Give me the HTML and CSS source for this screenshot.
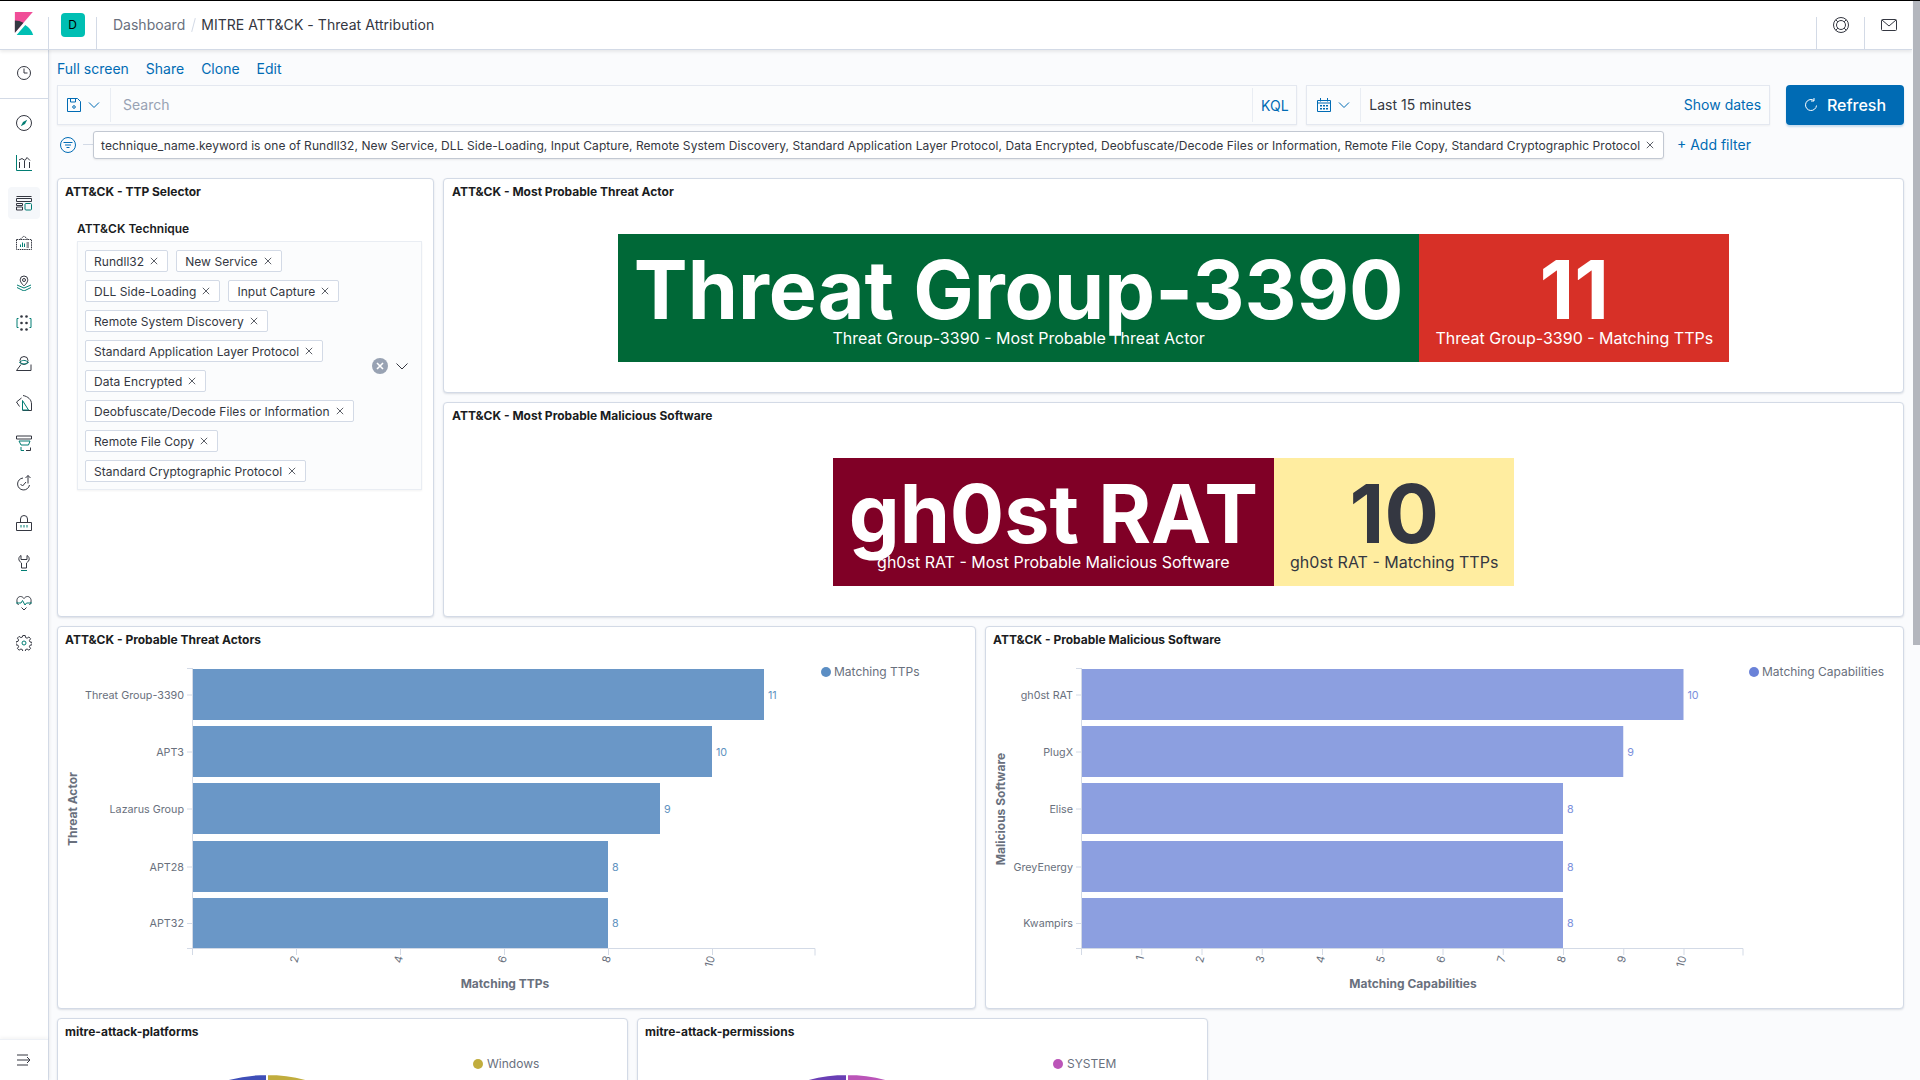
FILE: index.html
```html
<!DOCTYPE html>
<html lang="en">
<head>
    <meta charset="UTF-8">
    <title>MITRE ATT&amp;CK - Threat Attribution - Kibana</title>
    <link rel="stylesheet" href="styles.css">
</head>
<body>
<div class="top-line"></div>
<div class="scroll-track"><div class="scroll-thumb"></div></div>
<div class="app">
    <header class="header">
        <div class="logo-cell">
            <svg width="23" height="23" viewBox="0 0 32 32"><path fill="#F04E98" d="M4 0v28.789L28.935.017z"/><path fill="#343741" d="M4 12v16.789l11.906-13.738A24.721 24.721 0 004 12"/><path fill="#00BFB3" d="M18.479 18.09L6.421 32h23.054a24.857 24.857 0 00-10.996-13.91z"/></svg>
        </div>
        <div class="space-cell"><span class="avatar">D</span></div>
        <nav class="crumbs"><span class="crumb-link">Dashboard</span><span class="crumb-sep"></span><span class="crumb-now">MITRE ATT&amp;CK - Threat Attribution</span></nav>
        <div class="head-btn">
            <svg class="ic16" viewBox="0 0 16 16"><g fill="none" stroke="#343741"><circle cx="8" cy="8" r="7.5"/><circle cx="8" cy="8" r="4.5"/><path d="M2.700 2.700l2.200 2.200M13.300 2.700l-2.200 2.200M2.700 13.300l2.200-2.200M13.300 13.300l-2.200-2.200"/></g></svg>
        </div>
        <div class="head-btn">
            <svg class="ic16" viewBox="0 0 16 16"><g fill="none" stroke="#343741"><rect x=".5" y="2.500" width="15" height="11" rx="1"/><path d="M1 3l7 6 7-6"/></g></svg>
        </div>
    </header>

    <aside class="sidenav">
        <div class="nav-group first">
            <div class="nav-item"><svg class="ic16" viewBox="0 0 16 16"><g fill="none" stroke="#343741"><circle cx="8" cy="8" r="6.500"/><path d="M8 3.500V8h3.500"/></g></svg></div>
        </div>
        <div class="nav-group">
            <div class="nav-item"><svg class="ic16" viewBox="0 0 16 16"><circle cx="8" cy="8" r="7.500" fill="none" stroke="#343741"/><path d="M11.200 4.800L9 9 4.800 11.200 7 7z" fill="#017d73"/></svg></div>
            <div class="nav-item"><svg class="ic16" viewBox="0 0 16 16"><path d="M.5 0v15.500H16" fill="none" stroke="#017d73"/><path d="M3.500 7v6M8.500 6v7M13.500 7v6M3 5l3-1.500L9 5.500 11 2.500l3 3" fill="none" stroke="#343741"/></svg></div>
            <div class="nav-item active"><svg class="ic16" viewBox="0 0 16 16"><g fill="none" stroke="#343741"><path d="M.5 1.500h15M.5 3.500h15v3H.5zM.5 12h6v3h-6zM.5 8.500h6v2h-6z"/></g><rect x="9" y="8.500" width="6.500" height="6.500" rx="1" fill="none" stroke="#017d73"/></svg></div>
            <div class="nav-item"><svg class="ic16" viewBox="0 0 16 16"><path d="M.5 4.500h15v10H.5zM4 4.500L8 1l4 3.500" fill="none" stroke="#343741" stroke-dasharray="1.500 .7"/><path d="M4.500 12V9.500M6.500 12V7.500M8.500 12V8.500" stroke="#017d73"/><path d="M10.500 8h2.500M10.500 10h2.500M10.500 12h2.500" stroke="#343741"/></svg></div>
            <div class="nav-item"><svg class="ic16" viewBox="0 0 16 16"><path d="M8 1a3.800 3.800 0 00-3.800 3.800C4.200 7.500 8 11 8 11s3.800-3.500 3.800-6.200A3.800 3.800 0 008 1z" fill="none" stroke="#343741"/><circle cx="8" cy="5" r="1.500" fill="none" stroke="#343741"/><path d="M1 10l7 3 7-3M1 12.500L8 16l7-3.500" fill="none" stroke="#017d73"/></svg></div>
            <div class="nav-item"><svg class="ic16" viewBox="0 0 16 16"><g fill="#343741"><circle cx="5.500" cy="1.500" r="1.300"/><circle cx="10.500" cy="1.500" r="1.300"/><circle cx="5.500" cy="8" r="1.300"/><circle cx="10.500" cy="8" r="1.300"/><circle cx="5.500" cy="14.500" r="1.300"/><circle cx="10.500" cy="14.500" r="1.300"/></g><path d="M2.500 3.500H1v9h1.500M13.500 3.500H15v9h-1.500" fill="none" stroke="#017d73"/></svg></div>
            <div class="nav-item"><svg class="ic16" viewBox="0 0 16 16"><path d="M.5 15.500L5 9.500M15 15.500V9.500M.5 15.500H15M4 5.500a4 4 0 118 0 4 4 0 01-8 0z" fill="none" stroke="#343741"/><path d="M3.500 7.500c2.500-2.800 6-2.800 9 0-3 2-6 2-9 0z" fill="none" stroke="#017d73"/></svg></div>
            <div class="nav-item"><svg class="ic16" viewBox="0 0 16 16"><path d="M5.500 3L.5 7l3 4.500M7 .5c5 1 8.500 4 8.500 8.500v6.500h-9" fill="none" stroke="#343741"/><path d="M6.500 5.500L12.500 15H6.500z" fill="none" stroke="#017d73"/></svg></div>
            <div class="nav-item"><svg class="ic16" viewBox="0 0 16 16"><path d="M.5 1h15M.5 1v3h15V1M10 15.500h4.500v-3" fill="none" stroke="#343741"/><path d="M3 6h11l-1.500 4H5zM5 12v3.500h3" fill="none" stroke="#017d73"/></svg></div>
            <div class="nav-item"><svg class="ic16" viewBox="0 0 16 16"><path d="M7 3a6 6 0 106.500 7M12 8.500V.5M9.500 3L12 .5 14.500 3" fill="none" stroke="#343741"/><path d="M4.500 9l2 2 3.500-4" fill="none" stroke="#343741"/></svg></div>
            <div class="nav-item"><svg class="ic16" viewBox="0 0 16 16"><path d="M.5 7.500h15v8H.5zM4.500 7.500V4a3.500 3.500 0 017 0v3.500" fill="none" stroke="#343741"/><path d="M5 10v2.500M8 10v2.500M11 10v2.500" stroke="#017d73"/></svg></div>
            <div class="nav-item"><svg class="ic16" viewBox="0 0 16 16"><path d="M5 .5C3 1.500 2.500 3.500 3 5c.5 1.500 2 2.500 2.500 3v5h5V8c.5-.5 2-1.500 2.500-3 .5-1.500 0-3.500-2-4.500V4.500H5z" fill="none" stroke="#343741"/><path d="M5 15.500h6" stroke="#017d73"/></svg></div>
            <div class="nav-item"><svg class="ic16" viewBox="0 0 16 16"><path d="M8 15l-2.500-2.500M8 15l2.500-2.500M2.500 10C-.5 6.500 1 1.500 4.500 1.500 6 1.500 7.300 2.500 8 3.500c.7-1 2-2 3.500-2C15 1.500 16.500 6.500 13.500 10" fill="none" stroke="#343741"/><path d="M0 8h5l1.500-2.500L9 10l1.500-2H16" fill="none" stroke="#017d73"/></svg></div>
            <div class="nav-item"><svg class="ic16" viewBox="0 0 16 16"><path d="M6.800.5h2.400l.4 2.100 1.500.6 1.800-1.200 1.700 1.700-1.200 1.800.6 1.500 2.100.4v2.400l-2.100.4-.6 1.500 1.200 1.800-1.700 1.700-1.800-1.200-1.500.6-.4 2.100H6.800l-.4-2.100-1.500-.6-1.800 1.200-1.700-1.700 1.200-1.800-.6-1.500-2.100-.4V6.800l2.100-.4.6-1.500-1.200-1.800 1.700-1.700 1.800 1.200 1.500-.6z" fill="none" stroke="#343741"/><circle cx="8" cy="8" r="2" fill="none" stroke="#017d73"/></svg></div>
        </div>
        <div class="nav-bottom">
            <svg class="ic16" viewBox="0 0 16 16"><path d="M1 3h11M1 8h13M1 13h11M11 5l3 3-3 3" fill="none" stroke="#343741"/></svg>
        </div>
    </aside>

    <main class="main">
        <div class="links">
            <a>Full screen</a><a>Share</a><a>Clone</a><a>Edit</a>
        </div>

        <div class="query-row">
            <div class="search-group">
                <div class="addon save-btn">
                    <svg class="ic14" viewBox="0 0 14 14"><path d="M.5.5h10l3 3v10H.5zM3.500.5V4h5V.5" fill="none" stroke="#006bb4"/><circle cx="7" cy="9" r="1.300" fill="none" stroke="#006bb4"/></svg>
                    <svg class="chev" viewBox="0 0 12 12"><path d="M1 3.500l5 5 5-5" fill="none" stroke="#006bb4"/></svg>
                </div>
                <div class="search-input">Search</div>
                <div class="addon kql">KQL</div>
            </div>
            <div class="date-group">
                <div class="addon cal-btn">
                    <svg class="ic14" viewBox="0 0 14 14"><path d="M.5 2.500h13v11H.5zM.5 5h13M3.500 0v3.500M10.500 0v3.500" fill="none" stroke="#006bb4"/><path d="M3 7h2v1.500H3zM6 7h2v1.500H6zM9 7h2v1.500H9zM3 10h2v1.500H3zM6 10h2v1.500H6zM9 10h2v1.500H9z" fill="#006bb4"/></svg>
                    <svg class="chev" viewBox="0 0 12 12"><path d="M1 3.500l5 5 5-5" fill="none" stroke="#006bb4"/></svg>
                </div>
                <div class="date-text">Last 15 minutes</div>
                <a class="show-dates">Show dates</a>
            </div>
            <button class="refresh">
                <svg class="ic14" viewBox="0 0 14 14"><path d="M12.500 7.500A5.500 5.500 0 117 1.500c1 0 2 .3 3 1M10 0v3H7" fill="none" stroke="#fff"/></svg>
                Refresh
            </button>
        </div>

        <div class="filter-row">
            <svg class="filter-ic" viewBox="0 0 16 16"><circle cx="8" cy="8" r="7.500" fill="none" stroke="#006bb4"/><path d="M3.500 5.500h9M5 8h6M6.500 10.500h3" stroke="#006bb4"/></svg>
            <span class="filter-dash"></span>
            <div class="pill">technique_name.keyword is one of Rundll32, New Service, DLL Side-Loading, Input Capture, Remote System Discovery, Standard Application Layer Protocol, Data Encrypted, Deobfuscate/Decode Files or Information, Remote File Copy, Standard Cryptographic Protocol<svg class="x" viewBox="0 0 10 10"><path d="M1 1l8 8M9 1l-8 8"/></svg></div>
            <a class="add-filter">+ Add filter</a>
        </div>

        <div class="row-top">
            <section class="panel ttp">
                <h3 class="panel-title">ATT&amp;CK - TTP Selector</h3>
                <div class="ttp-body">
                    <label class="ttp-label">ATT&amp;CK Technique</label>
                    <div class="combo">
                        <div class="chips">
                            <div class="chip-line"><span class="chip">Rundll32<svg class="x" viewBox="0 0 10 10"><path d="M1 1l8 8M9 1l-8 8"/></svg></span><span class="chip">New Service<svg class="x" viewBox="0 0 10 10"><path d="M1 1l8 8M9 1l-8 8"/></svg></span></div>
                            <div class="chip-line"><span class="chip">DLL Side-Loading<svg class="x" viewBox="0 0 10 10"><path d="M1 1l8 8M9 1l-8 8"/></svg></span><span class="chip">Input Capture<svg class="x" viewBox="0 0 10 10"><path d="M1 1l8 8M9 1l-8 8"/></svg></span></div>
                            <div class="chip-line"><span class="chip">Remote System Discovery<svg class="x" viewBox="0 0 10 10"><path d="M1 1l8 8M9 1l-8 8"/></svg></span></div>
                            <div class="chip-line"><span class="chip">Standard Application Layer Protocol<svg class="x" viewBox="0 0 10 10"><path d="M1 1l8 8M9 1l-8 8"/></svg></span></div>
                            <div class="chip-line"><span class="chip">Data Encrypted<svg class="x" viewBox="0 0 10 10"><path d="M1 1l8 8M9 1l-8 8"/></svg></span></div>
                            <div class="chip-line"><span class="chip">Deobfuscate/Decode Files or Information<svg class="x" viewBox="0 0 10 10"><path d="M1 1l8 8M9 1l-8 8"/></svg></span></div>
                            <div class="chip-line"><span class="chip">Remote File Copy<svg class="x" viewBox="0 0 10 10"><path d="M1 1l8 8M9 1l-8 8"/></svg></span></div>
                            <div class="chip-line"><span class="chip">Standard Cryptographic Protocol<svg class="x" viewBox="0 0 10 10"><path d="M1 1l8 8M9 1l-8 8"/></svg></span></div>
                        </div>
                        <div class="combo-ctrl">
                            <span class="clear"><svg viewBox="0 0 10 10"><path d="M2 2l6 6M8 2L2 8" stroke="#fff" stroke-width="1.600"/></svg></span>
                            <svg class="chev dark" viewBox="0 0 12 12"><path d="M.5 3.500L6 9l5.500-5.500" fill="none" stroke="#343741"/></svg>
                        </div>
                    </div>
                </div>
            </section>
            <div class="metrics-col">
                <section class="panel metric-panel">
                    <h3 class="panel-title">ATT&amp;CK - Most Probable Threat Actor</h3>
                    <div class="metric-wrap">
                        <div class="metric green"><div class="metric-value">Threat Group-3390</div><div class="metric-label">Threat Group-3390 - Most Probable Threat Actor</div></div>
                        <div class="metric red"><div class="metric-value">11</div><div class="metric-label">Threat Group-3390 - Matching TTPs</div></div>
                    </div>
                </section>
                <section class="panel metric-panel">
                    <h3 class="panel-title">ATT&amp;CK - Most Probable Malicious Software</h3>
                    <div class="metric-wrap">
                        <div class="metric maroon"><div class="metric-value">gh0st RAT</div><div class="metric-label">gh0st RAT - Most Probable Malicious Software</div></div>
                        <div class="metric yellow"><div class="metric-value">10</div><div class="metric-label">gh0st RAT - Matching TTPs</div></div>
                    </div>
                </section>
            </div>
        </div>

        <div class="row-charts">
            <section class="panel chart-panel">
                <h3 class="panel-title">ATT&amp;CK - Probable Threat Actors</h3>
                <div class="chart" id="chart-actors"></div>
            </section>
            <section class="panel chart-panel">
                <h3 class="panel-title">ATT&amp;CK - Probable Malicious Software</h3>
                <div class="chart" id="chart-software"></div>
            </section>
        </div>

        <div class="row-pies">
            <section class="panel pie-panel">
                <h3 class="panel-title">mitre-attack-platforms</h3>
                <svg class="pie-svg" width="569" height="90" viewBox="0 0 569 90">
                    <path d="M209 178V28A150 150 0 0 0 103 72Z" fill="#3f4fb8" stroke="#fff" stroke-width="2"/>
                    <path d="M209 178V28A150 150 0 0 1 315 72Z" fill="#c1ad3e" stroke="#fff" stroke-width="2"/>
                    <circle cx="420" cy="18" r="5" fill="#c1ad3e"/>
                    <text x="429" y="22" class="legend-text">Windows</text>
                </svg>
            </section>
            <section class="panel pie-panel">
                <h3 class="panel-title">mitre-attack-permissions</h3>
                <svg class="pie-svg" width="569" height="90" viewBox="0 0 569 90">
                    <path d="M209 178V28A150 150 0 0 0 103 72Z" fill="#6a3fb5" stroke="#fff" stroke-width="2"/>
                    <path d="M209 178V28A150 150 0 0 1 315 72Z" fill="#bb55b8" stroke="#fff" stroke-width="2"/>
                    <circle cx="420" cy="18" r="5" fill="#bb55b8"/>
                    <text x="429" y="22" class="legend-text">SYSTEM</text>
                </svg>
            </section>
        </div>
    </main>
</div>
<script src="charts.js"></script>
</body>
</html>
```

FILE: styles.css
```css
* {
    box-sizing: border-box;
}
html, body {
    margin: 0;
    height: 1080px;
    overflow: hidden;
    background: #fff;
}
body {
    font-family: Inter, "Noto Sans", sans-serif;
    font-size: 14px;
    color: #343741;
}
a {
    color: #006bb4;
}
svg {
    display: block;
}
.ic16 {
    width: 16px;
    height: 16px;
}
.ic14 {
    width: 14px;
    height: 14px;
}
.top-line {
    position: fixed;
    top: 0;
    left: 0;
    right: 0;
    height: 1px;
    background: #000;
    z-index: 5;
}
.scroll-track {
    position: fixed;
    top: 0;
    right: 0;
    width: 8px;
    height: 1080px;
    padding-left: 1px;
    background: #fafbfd;
    z-index: 4;
}
.scroll-thumb {
    height: 645px;
    background: #b3b6bd;
}
.app {
    display: grid;
    grid-template-columns: 49px 1fr;
    grid-template-rows: 50px 1fr;
    width: 1912px;
    height: 1080px;
    overflow: hidden;
}

/* header */
.header {
    grid-column: 1 / 3;
    display: flex;
    align-items: stretch;
    padding-top: 1px;
    background: #fff;
    border-bottom: 1px solid #d3dae6;
    box-shadow: 0 2px 3px rgba(0, 0, 0, .08);
    z-index: 3;
}
.logo-cell {
    width: 49px;
    height: 32px;
    margin-top: 16px;
    padding-left: 12px;
    border-right: 1px solid #d3dae6;
}
.logo-cell svg {
    margin-top: -5px;
}
.space-cell {
    width: 48px;
    height: 32px;
    margin-top: 16px;
    display: flex;
    align-items: center;
    justify-content: center;
    border-right: 1px solid #d3dae6;
}
.avatar {
    width: 24px;
    height: 24px;
    margin-top: -16px;
    border-radius: 4px;
    background: #00bfb3;
    color: #000;
    font-size: 12px;
    line-height: 24px;
    text-align: center;
}
.crumbs {
    flex: 1;
    display: flex;
    align-items: center;
    padding-left: 16px;
    padding-bottom: 1px;
}
.crumb-link {
    color: #69707d;
}
.crumb-sep {
    width: 1px;
    height: 14px;
    margin: 0 7px 0 8px;
    background: #d3dae6;
    transform: rotate(15deg);
}
.crumb-now {
    color: #343741;
    letter-spacing: .05px;
}
.head-btn {
    width: 48px;
    height: 32px;
    margin-top: 16px;
    display: flex;
    align-items: center;
    justify-content: center;
    border-left: 1px solid #d3dae6;
}
.head-btn svg {
    margin-top: -16px;
}

/* side nav */
.sidenav {
    position: relative;
    background: #fff;
    border-right: 1px solid #d3dae6;
    box-shadow: 1px 0 3px rgba(0, 0, 0, .06);
    z-index: 2;
}
.nav-group {
    padding: 8px 8px 4px;
}
.nav-group.first {
    height: 49px;
    border-bottom: 1px solid #d3dae6;
    padding: 7px 8px 0;
}
.nav-item {
    width: 32px;
    height: 32px;
    margin-bottom: 8px;
    display: flex;
    align-items: center;
    justify-content: center;
    border-radius: 4px;
}
.nav-item.active {
    background: #f5f7fa;
}
.nav-bottom {
    position: absolute;
    left: 0;
    right: 0;
    bottom: 0;
    height: 41px;
    display: flex;
    align-items: center;
    justify-content: center;
    border-top: 1px solid #eef1f6;
    box-shadow: 0 -2px 3px rgba(0, 0, 0, .04);
}

/* main */
.main {
    background: #fafbfd;
    padding: 0 8px;
    overflow: hidden;
}
.links {
    display: flex;
    gap: 17px;
    height: 35px;
    align-items: center;
    line-height: 20px;
    padding-top: 3px;
}
.query-row {
    display: flex;
    height: 40px;
}
.search-group, .date-group {
    display: flex;
    align-items: stretch;
    background: #fbfcfd;
    border: 1px solid #e4e8f0;
    box-shadow: 0 1px 2px rgba(0, 0, 0, .05);
}
.search-group {
    width: 1241px;
}
.addon {
    display: flex;
    align-items: center;
    gap: 7px;
}
.save-btn {
    width: 53px;
    padding-left: 9px;
    border-right: 1px solid #e9edf3;
    margin: 2px 0;
}
.search-input {
    flex: 1;
    color: #98a2b3;
    line-height: 38px;
    padding-left: 12px;
}
.kql {
    width: 44px;
    justify-content: center;
    color: #006bb4;
    border-left: 1px solid #e9edf3;
    margin: 2px 0;
}
.date-group {
    width: 464px;
    margin-left: 9px;
}
.cal-btn {
    width: 54px;
    padding-left: 10px;
    border-right: 1px solid #e9edf3;
    margin: 2px 0;
}
.date-text {
    flex: 1;
    line-height: 38px;
    padding-left: 8px;
}
.show-dates {
    line-height: 38px;
    padding-right: 8px;
}
.chev {
    width: 12px;
    height: 12px;
}
.refresh {
    width: 118px;
    margin-left: 16px;
    display: flex;
    align-items: center;
    justify-content: center;
    gap: 9px;
    font: 500 16px Inter, sans-serif;
    color: #fff;
    background: #006bb4;
    border: 0;
    border-radius: 4px;
    box-shadow: 0 2px 2px rgba(0, 107, 180, .2);
}
.filter-row {
    display: flex;
    align-items: center;
    height: 27px;
    margin-top: 6px;
}
.filter-ic {
    width: 16px;
    height: 16px;
    margin-left: 3px;
}
.filter-dash {
    width: 10px;
    height: 1px;
    margin: 0 0 0 7px;
    background: #d3dae6;
}
.pill {
    display: flex;
    align-items: center;
    gap: 6px;
    width: 1571px;
    height: 28px;
    padding: 1px 0 0 7px;
    font-size: 12px;
    letter-spacing: .07px;
    white-space: nowrap;
    background: #fff;
    border: 1px solid #c2c8d2;
    border-radius: 3px;
    box-shadow: 0 1px 2px rgba(0, 0, 0, .08);
}
.x {
    width: 8px;
    height: 8px;
    flex: none;
    stroke: #343741;
    fill: none;
}
.add-filter {
    margin-left: 13px;
    white-space: nowrap;
}

/* panels */
.panel {
    background: #fff;
    border: 1px solid #d3dae6;
    border-radius: 4px;
    box-shadow: 0 1px 2px rgba(50, 60, 90, .15);
    overflow: hidden;
}
.panel-title {
    margin: 0;
    padding: 5px 7px 0;
    font-size: 12px;
    font-weight: 700;
    line-height: 16px;
    color: #1a1c21;
}
.row-top {
    display: flex;
    gap: 9px;
    height: 439px;
    margin-top: 20px;
}
.ttp {
    width: 377px;
    flex: none;
}
.ttp-body {
    padding: 21px 11px 0 19px;
}
.ttp-label {
    display: block;
    font-size: 12px;
    font-weight: 600;
    line-height: 16px;
    color: #1a1c21;
    margin-bottom: 4px;
}
.combo {
    display: flex;
    align-items: center;
    height: 249px;
    padding: 8px 0 0 7px;
    background: #fbfcfd;
    border: 1px solid #e9edf3;
    box-shadow: 0 1px 2px rgba(0, 0, 0, .05);
}
.chips {
    flex: 1;
    align-self: flex-start;
}
.chip-line {
    display: flex;
    gap: 8px;
    margin-bottom: 8px;
}
.chip {
    display: inline-flex;
    align-items: center;
    gap: 6px;
    height: 22px;
    padding: 0 9px 0 8px;
    font-size: 12px;
    letter-spacing: .05px;
    white-space: nowrap;
    background: #fff;
    border: 1px solid #d3dae6;
    border-radius: 2px;
}
.combo-ctrl {
    display: flex;
    align-items: center;
    gap: 8px;
    padding-right: 13px;
    margin-top: -7px;
}
.clear {
    display: block;
    width: 16px;
    height: 16px;
    padding: 3px;
    border-radius: 50%;
    background: #98a2b3;
}
.metrics-col {
    flex: 1;
    display: flex;
    flex-direction: column;
    gap: 9px;
}
.metric-panel {
    flex: 1;
    display: flex;
    flex-direction: column;
}
.metric-panel .panel-title {
    padding-left: 8px;
}
.metric-wrap {
    flex: 1;
    display: flex;
    align-items: center;
    justify-content: center;
    padding-top: 3px;
}
.metric {
    padding: 16px;
    text-align: center;
    white-space: nowrap;
}
.metric-value {
    font-size: 80.700px;
    font-weight: 700;
    line-height: 80px;
}
.metric-label {
    font-size: 16px;
    line-height: 16px;
}
.green {
    background: #006837;
    color: #fff;
}
.red {
    background: #d73027;
    color: #fff;
}
.maroon {
    background: #800026;
    color: #fff;
}
.yellow {
    background: #ffeda0;
    color: #343741;
}
.row-charts {
    display: flex;
    gap: 9px;
    height: 383px;
    margin-top: 9px;
}
.chart-panel {
    flex: 1;
}
.chart {
    padding-top: 1px;
}
.axis-label {
    font-size: 10.750px;
    fill: #69707d;
}
.tick-label {
    font-size: 11px;
    fill: #69707d;
}
.axis-title {
    font-size: 12px;
    font-weight: 700;
    fill: #69707d;
}
.legend-text {
    font-size: 12px;
    fill: #69707d;
}
.row-pies {
    display: flex;
    gap: 9px;
    margin-top: 9px;
}
.pie-panel {
    width: 571px;
    height: 120px;
}
.pie-svg {
    margin-top: 6px;
}
```

FILE: charts.js
```js
const actorAxis = { unit: 52, end: 623, ticks: [2, 4, 6, 8, 10] };
const softwareAxis = { unit: 60.25, end: 662, ticks: [1, 2, 3, 4, 5, 6, 7, 8, 9, 10] };

function drawChart(id, cfg) {
    const rowTops = [20, 77, 134, 192, 249];
    const rowHeights = [51, 51, 51, 51, 50];
    let s = '<svg width="917" height="355" viewBox="0 0 917 355">';

    cfg.rows.forEach((row, i) => {
        const y = rowTops[i];
        const w = row[1] * cfg.axis.unit;
        const mid = y + rowHeights[i] / 2;
        s += `<rect x="${cfg.x0}" y="${y}" width="${w}" height="${rowHeights[i]}" fill="${cfg.color}"/>`;
        s += `<text class="axis-label" x="${cfg.x0 - 8}" y="${mid + 4}" text-anchor="end">${row[0]}</text>`;
        s += `<path d="M${cfg.x0 - 5} ${mid + .5}h5" stroke="#d3dae6"/>`;
        s += `<text class="axis-label" x="${cfg.x0 + w + 4}" y="${mid + 4}" style="fill:${cfg.labelColor}">${row[1]}</text>`;
    });

    // axes
    s += `<path d="M${cfg.x0 + .5} 19v287" stroke="#d3dae6" fill="none"/>`;
    s += `<path d="M${cfg.x0 - 5} 299.500H${cfg.x0 + cfg.axis.end}v7" stroke="#d3dae6" fill="none"/>`;
    s += `<path d="M${cfg.x0 - 5} 19.500h5" stroke="#d3dae6"/>`;
    cfg.axis.ticks.forEach((t) => {
        const x = cfg.x0 + t * cfg.axis.unit;
        s += `<path d="M${x + .5} 299v7" stroke="#d3dae6"/>`;
        s += `<text class="tick-label" transform="translate(${x + 3} 308) rotate(-75)" text-anchor="end">${t}</text>`;
    });

    s += `<text class="axis-title" transform="translate(${cfg.titleX} 160) rotate(-90)" text-anchor="middle">${cfg.yTitle}</text>`;
    s += `<text class="axis-title" x="${cfg.xTitleX}" y="339" text-anchor="middle">${cfg.xTitle}</text>`;
    s += `<circle cx="${cfg.legendX}" cy="23" r="5" fill="${cfg.legendColor}"/>`;
    s += `<text class="legend-text" x="${cfg.legendX + 8}" y="27">${cfg.legend}</text>`;
    s += '</svg>';
    document.getElementById(id).innerHTML = s;
}

drawChart('chart-actors', {
    x0: 134,
    axis: actorAxis,
    color: '#6a97c7',
    labelColor: '#6092c0',
    legendColor: '#5b8ec4',
    legendX: 768,
    legend: 'Matching TTPs',
    yTitle: 'Threat Actor',
    titleX: 19,
    xTitle: 'Matching TTPs',
    xTitleX: 447,
    rows: [['Threat Group-3390', 11], ['APT3', 10], ['Lazarus Group', 9], ['APT28', 8], ['APT32', 8]]
});

drawChart('chart-software', {
    x0: 95,
    axis: softwareAxis,
    color: '#8c9fe0',
    labelColor: '#7b8fdc',
    legendColor: '#6a82d8',
    legendX: 768,
    legend: 'Matching Capabilities',
    yTitle: 'Malicious Software',
    titleX: 19,
    xTitle: 'Matching Capabilities',
    xTitleX: 427,
    rows: [['gh0st RAT', 10], ['PlugX', 9], ['Elise', 8], ['GreyEnergy', 8], ['Kwampirs', 8]]
});
```
